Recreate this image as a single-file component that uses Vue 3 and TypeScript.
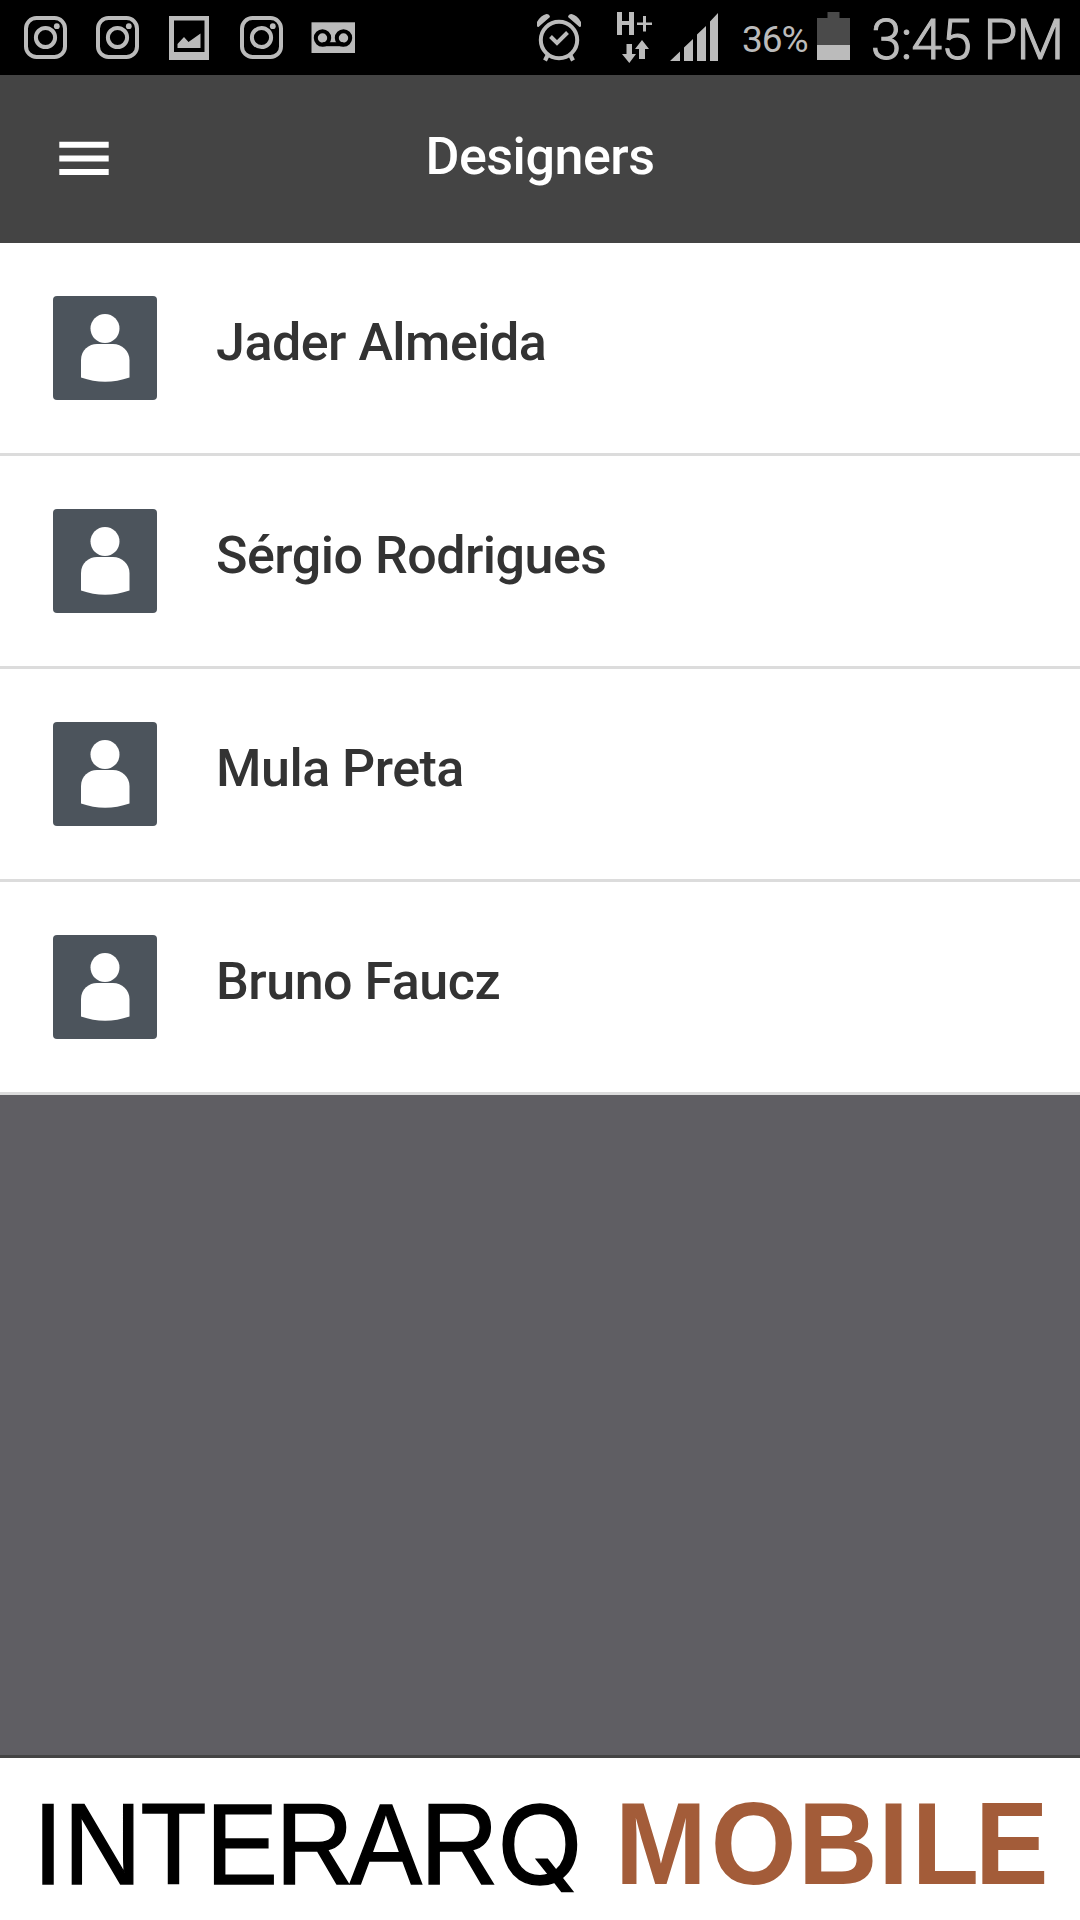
<script setup lang="ts">
interface Designer {
  id: number
  name: string
}

const designers: Designer[] = [
  { id: 1, name: 'Jader Almeida' },
  { id: 2, name: 'Sérgio Rodrigues' },
  { id: 3, name: 'Mula Preta' },
  { id: 4, name: 'Bruno Faucz' },
]

const notifications: string[] = ['instagram', 'instagram', 'gallery', 'instagram', 'voicemail']
</script>

<template>
  <div class="screen">
    <div class="status">
      <div class="notifications">
        <svg v-for="(kind, i) in notifications" :key="i" class="note" viewBox="0 0 44 46" fill="#bbb">
          <g v-if="kind === 'instagram'">
            <rect x="2" y="4" width="39" height="39" rx="10.5" fill="none" stroke="#bbb" stroke-width="4" />
            <circle cx="21.500" cy="23.500" r="9.600" fill="none" stroke="#bbb" stroke-width="4" />
            <circle cx="32.800" cy="12.200" r="2.900" />
          </g>
          <g v-else-if="kind === 'gallery'">
            <path fill-rule="evenodd" d="M1 2h40v44H1zM6 6.500v31.500h30.500V6.500z" />
            <path d="M9.500 34v-4l6.500-7 4.500 5L32.500 19.500V34z" />
          </g>
          <g v-else>
            <rect x="-0.500" y="8.300" width="43.500" height="30.700" />
            <g fill="none" stroke="#000" stroke-width="4">
              <circle cx="10.500" cy="24" r="6.700" />
              <circle cx="31.500" cy="24" r="6.700" />
              <path d="M10.500 30.200h21" />
            </g>
          </g>
        </svg>
      </div>
      <svg class="system" viewBox="530 0 200 75" fill="#bbb">
        <circle cx="559" cy="40" r="18.200" fill="none" stroke="#bbb" stroke-width="4" />
        <path d="M550.500 36.500l6.500 6.500 10.500-10.500" fill="none" stroke="#bbb" stroke-width="4" />
        <path d="M548 54.500l-3 6M570 54.500l3 6" stroke="#bbb" stroke-width="4.200" />
        <path d="M537 26.500V22q4-7 9.500-8 3 0 3.500 3L538.500 27zM581 26.500V22q-4-7-9.500-8-3 0-3.500 3L579.500 27z" />
        <path d="M617 12h5v9h7v-9h5v23h-5V25h-7v10h-5zM643 16h3v6.500h6V25h-6v6.500h-3V25h-6v-2.500h6z" />
        <path d="M626.500 44h5.500v10h4l-6.700 9-7.300-9h4.500zM639 59h6V49h4l-7-9-7 9h4z" />
        <path d="M670 61l10-9.500V61zM684 61V47.500l9-8.500v22zM697 61V34.500l9-8.500v35zM710 61V21.500l8-8.500v48z" />
      </svg>
      <span class="percent">36%</span>
      <svg class="battery" viewBox="0 0 33 48">
        <path d="M10.500 0h12v6H33v27H0V6h10.500z" fill="#4a4a4a" />
        <path d="M0 33h33v15H0z" fill="#bbb" />
      </svg>
      <span class="clock">3:45 PM</span>
    </div>

    <header class="header">
      <svg class="menu" viewBox="0 0 50 35" fill="#fff">
        <path d="M0.300 0.700h49.400v6H0.300zM0.300 14.400h49.400v6H0.300zM0.300 28h49.400v6H0.300z" />
      </svg>
      <h1 class="title">Designers</h1>
    </header>

    <ul class="list">
      <li v-for="designer in designers" :key="designer.id" class="row">
        <svg class="avatar" viewBox="0 0 104 104">
          <rect width="104" height="104" rx="4" fill="#4c545c" />
          <circle cx="52" cy="32.500" r="14.500" fill="#fff" />
          <path d="M28 81.500V64C28 54 36 48 44 48h16c9 0 16.500 7 16.500 16v17.500Q52 90 28 81.500z" fill="#fff" />
        </svg>
        <span class="name">{{ designer.name }}</span>
      </li>
    </ul>

    <footer class="footer">
      <svg class="brand" viewBox="0 0 1080 162">
        <text
          class="first"
          transform="scale(0.94 1)"
          x="35 67.500 149.500 219 293 372 447"
          y="125.600"
        >INTERAR</text>
        <text class="first tail" transform="scale(1.04 1)" x="477.500" y="125.600">Q</text>
        <text
          class="second"
          transform="scale(0.95 1)"
          x="647.300 748.100 840.100 924.400 959.700 1026.300"
          y="126.300"
        >MOBILE</text>
      </svg>
    </footer>
  </div>
</template>

<style>
body {
  margin: 0;
  background: #5f5e63;
}
</style>

<style scoped>
.screen {
  display: flex;
  flex-direction: column;
  width: 1080px;
  height: 1920px;
  overflow: hidden;
  background: #5f5e63;
  font-family: Roboto, sans-serif;
}
.status {
  display: flex;
  flex: none;
  height: 75px;
  background: #000;
  color: #bbb;
  white-space: nowrap;
}
.notifications {
  display: flex;
  gap: 28px;
  width: 530px;
  padding: 14px 0 0 24px;
  box-sizing: border-box;
}
.note {
  flex: none;
  width: 44px;
  height: 46px;
  overflow: visible;
}
.system {
  flex: none;
  width: 200px;
  height: 75px;
}
.percent {
  width: 75px;
  padding-left: 12px;
  font-size: 37px;
  line-height: 79px;
  letter-spacing: -1px;
}
.battery {
  flex: none;
  width: 33px;
  height: 48px;
  margin-top: 12px;
}
.clock {
  margin-left: 21px;
  font-size: 55px;
  font-weight: 300;
  line-height: 80px;
  letter-spacing: -0.8px;
  -webkit-text-stroke: 1.1px #bbb;
}
.header {
  display: grid;
  flex: none;
  grid-template-columns: 140px 1fr 140px;
  height: 168px;
  background: #444;
}
.menu {
  width: 50px;
  height: 35px;
  margin: 66px 0 0 59px;
}
.title {
  margin: 0;
  color: #fff;
  font-size: 52px;
  font-weight: 500;
  line-height: 164px;
  letter-spacing: -0.45px;
  text-align: center;
}
.list {
  flex: none;
  margin: 0;
  padding: 0;
  list-style: none;
}
.row {
  display: flex;
  height: 213px;
  padding-left: 53px;
  border-bottom: 3px solid #dcdcdc;
  box-sizing: border-box;
  background: #fff;
}
.avatar {
  flex: none;
  width: 104px;
  height: 104px;
  margin-top: 53px;
}
.name {
  margin-left: 59px;
  color: #333;
  font-size: 52px;
  font-weight: 500;
  line-height: 199px;
  letter-spacing: -0.5px;
}
.footer {
  flex: none;
  height: 165px;
  margin-top: auto;
  border-top: 3px solid #444;
  box-sizing: border-box;
  background: #fff;
}
.brand {
  display: block;
  width: 1080px;
  height: 162px;
  font-family: 'Liberation Sans', Arial, sans-serif;
  font-size: 116px;
}
.first {
  fill: #000;
  stroke: #000;
  stroke-width: 1.5px;
  font-size: 115px;
}
.tail {
  font-family: Inter, sans-serif;
  font-size: 109px;
}
.second {
  fill: #a35c39;
  font-weight: 700;
}
</style>
